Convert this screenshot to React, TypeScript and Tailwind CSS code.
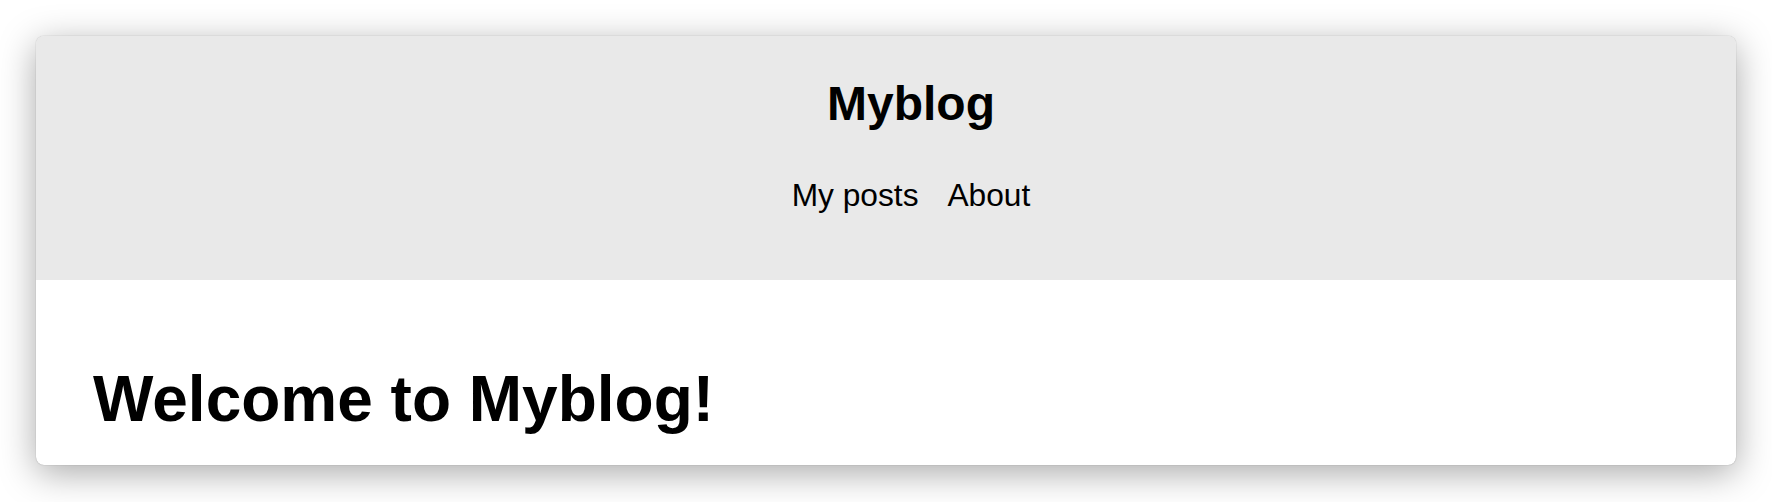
import React from 'react'

const font = { fontFamily: '"Liberation Sans", Arial, Helvetica, sans-serif' }

export default function App(){
  const links = ['My posts', 'About']
  return (
    <div className="w-[1772px] h-[502px] bg-white p-[36px] overflow-hidden" style={font}>
      <div className="h-[429px] rounded-[8px] bg-white overflow-hidden shadow-[0_0_1px_rgba(0,0,0,0.4),0_8px_36px_rgba(0,0,0,0.34)]">
        <header className="bg-[#e9e9e9] h-[244px] pt-[40px] pl-[50px] flex flex-col items-center text-black">
          <h1 className="text-[48px] leading-[56px] font-bold">Myblog</h1>
          <nav className="mt-[43px] flex gap-[29px] text-[31.7px] leading-[40px]">
            {links.map(l => (
              <a key={l} href="#" className="text-black">{l}</a>
            ))}
          </nav>
        </header>
        <main className="pt-[83px] pl-[57px]">
          <h2 className="text-[64px] leading-[72px] font-bold text-black">Welcome to Myblog!</h2>
        </main>
      </div>
    </div>
  )
}
